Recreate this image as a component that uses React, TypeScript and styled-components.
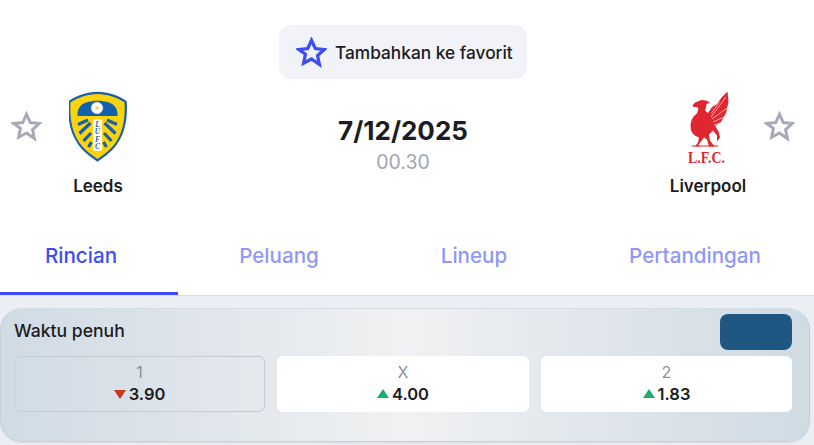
import React from "react";
import styled, { createGlobalStyle } from "styled-components";

const Global = createGlobalStyle`
  html, body { margin: 0; padding: 0; background: #fff; }
  body { font-family: "Inter", "Liberation Sans", sans-serif; color: #1c1c22; }
  * { box-sizing: border-box; }
`;
const Page = styled.div`width: 814px; height: 445px; overflow: hidden; display: flex; flex-direction: column; background: #ebeef3;`;
const Header = styled.header`height: 296px; background: #fff; display: flex; flex-direction: column; align-items: center; padding-top: 25px; flex: none;`;
const FavButton = styled.button`width: 248px; height: 54px; margin-right: 8px; border: 0; border-radius: 12px; background: #f1f3f8; display: flex; align-items: center; gap: 8px; padding: 0 0 0 17px; font: 500 17.3px "Inter", sans-serif; color: #1c1c22;`;
const Match = styled.div`width: 100%; display: grid; grid-template-columns: 196px 1fr 204px; margin-top: 12px;`;
const Team = styled.div<{ $right?: boolean }>`display: flex; flex-direction: ${(p) => (p.$right ? "row-reverse" : "row")}; align-items: flex-start; padding: ${(p) => (p.$right ? "0 19px 0 0" : "0 0 0 11px")};`;
const StarSlot = styled.div`margin-top: 20px; width: 31px; height: 31px; flex: none;`;
const TeamBody = styled.div<{ $right?: boolean }>`display: flex; flex-direction: column; align-items: center; width: ${(p) => (p.$right ? "80px" : "60px")}; margin: ${(p) => (p.$right ? "0 16px 0 0" : "0 0 0 26px")}; font: 600 17px "Inter", sans-serif;`;
const Logo = styled.div`height: 72px; display: flex; align-items: flex-start; margin-bottom: 13px;`;
const Center = styled.div`display: flex; flex-direction: column; align-items: center; padding-top: 25px;`;
const DateText = styled.div`font: 700 26px/30px "Inter", sans-serif;`;
const TimeText = styled.div`font: 400 19.5px/24px "Inter", sans-serif; color: #a2a5ae; margin-top: 4px;`;
const Tabs = styled.nav`margin-top: auto; width: 100%; display: grid; grid-template-columns: 178px 202px 188px 246px; height: 71px; border-bottom: 1px solid #dadbde;`;
const Tab = styled.div<{ $on?: boolean; $last?: boolean }>`display: flex; justify-content: center; padding: 17px ${(p) => (p.$on ? "16px" : "0")} 0 ${(p) => (p.$last ? "8px" : "0")}; font: 500 20.6px/28px "Inter", sans-serif; color: ${(p) => (p.$on ? "#3d4cf5" : "#8f97fb")}; height: 70px; border-bottom: 3px solid ${(p) => (p.$on ? "#3d4cf5" : "transparent")};`;
const Card = styled.section`margin-top: 12px; width: 810px; height: 134px; border-radius: 22px; border: 1px solid #c4d0dc; border-top-color: #d5dde5; background: linear-gradient(90deg, #d0dbe4 0%, #dfe5eb 25%, #f0f1f2 50%, #dfe5eb 75%, #d0dbe4 100%); padding: 5px 17px 0 13px; box-shadow: 0 1px 2px rgba(0,0,0,.08);`;
const CardHead = styled.div`display: flex; justify-content: space-between; align-items: flex-start; height: 36px;`;
const CardTitle = styled.div`font: 500 17.6px/34px "Inter", sans-serif;`;
const Badge = styled.div`width: 72px; height: 36px; border-radius: 8px; background: #1f5783;`;
const Odds = styled.div`display: grid; grid-template-columns: 251px 252px 251px; gap: 12px; margin-top: 6px;`;
const Odd = styled.div<{ $dim?: boolean }>`height: 56px; border-radius: 6px; text-align: center; background: ${(p) => (p.$dim ? "transparent" : "#fff")}; border: 1px solid ${(p) => (p.$dim ? "#c5ccd4" : "#fff")}; padding-top: 5px;`;
const OddLabel = styled.div`font: 400 16px/21px "Inter", sans-serif; color: #8d9099;`;
const OddValue = styled.div`display: flex; justify-content: center; align-items: center; gap: 3px; font: 600 16.5px/22px "Inter", sans-serif;`;

const Star = ({ size, color, w }: { size: number; color: string; w: number }) => (
  <svg width={size} height={size} viewBox="0 0 24 24" fill="none" stroke={color} strokeWidth={w} strokeLinejoin="miter">
    <path d="M12 2.5l2.9 6.4 7 .8-5.2 4.7 1.4 6.9L12 17l-6.1 3.3 1.4-6.9L2.1 9.7l7-.8z" />
  </svg>
);
const Tri = ({ up }: { up?: boolean }) => (
  <svg width="12" height="10" viewBox="0 0 12 10"><path d={up ? "M6 0l6 9H0z" : "M0 1h12L6 10z"} fill={up ? "#1bae6b" : "#c9361f"} /></svg>
);
const LeedsLogo = () => (
  <svg width="58" height="72" viewBox="69 11 58 72">
    <path d="M97.500 11.700C108 12 118 15 126.700 21c1 14-.7 29-7.700 40-5 9-13 15-21.500 20.700C89 76 81 70 76 61c-7-11-8.500-26-7.500-40C77 15 87 12 97.500 11.700z" fill="#1a5fa8" />
    <path d="M97.500 14C107 14.300 116 17 124.500 22.300c.8 13-.7 27-7.200 37.700C112.500 68 105 74 97.500 79 90 74 82.500 68 77.700 60c-6.500-10.700-8-24.700-7.200-37.700C79 17 88 14.300 97.500 14z" fill="#fbd30f" />
    <path d="M77.500 36C77 30 80 24.500 86 22.500c7.500-2.500 15.500-2.500 23 0 6 2 9 7.500 8.500 13.500z" fill="#1361ac" />
    <circle cx="97" cy="28" r="5.800" fill="#fff" stroke="#c5ccd2" strokeWidth=".8" />
    <circle cx="97" cy="28" r="1.800" fill="#e8d36a" />
    <path d="M93 40c2-1 7-1 9 0v29c0 1.500-2 2-4.500 2S93 70.500 93 69z" fill="#fff" />
    <g stroke="#1a5fa8" strokeWidth="3.200" fill="none">
      <path d="M78 44.500l10-4.500M79.500 53.500l11-10.500M83.500 61l7.500-8M88.500 67l3-5" />
      <path d="M117 44.500l-10-4.500M115.500 53.500l-11-10.500M111.500 61l-7.500-8M106.500 67l-3-5" />
    </g>
    <g fontFamily="Liberation Serif" fontStyle="italic" fontSize="7.500" fontWeight="700" fill="#2a5f9e" textAnchor="middle">
      <text x="97.500" y="46.500">L</text>
      <text x="97.500" y="54">U</text>
      <text x="97.500" y="61.500">F</text>
      <text x="97.500" y="69">C</text>
    </g>
  </svg>
);
const LfcLogo = () => (
  <svg width="60" height="77" viewBox="28 11 60 77" fill="#e0262f">
    <path d="M42.500 25.500L45 22.500l4-1.500 2-1 5 .5 4 2-3.500 1.500-.5 3.500-1 3q2 2 4 3l2 8 4 4 4 7 1 5-3 4 0-6-4-5-4 4 1 6 3 4 2 2-6 0-2-7-3-2-3 4-3 4 3 1-6 0 3-4 1-5q-9-3-8.500-12 .5-8 6.500-12l1.500-5-2-1.500-3 0z" />
    <path d="M58 33l4-6 5-3 5-7 5.500-5.500 1 10.500-2.500 11-5 9-7 5-4-7z" />
    <g stroke="#ffd9da" strokeWidth=".75" fill="none">
      <path d="M61 37l15-20M62 39l15-11M63 42l11-5M61.500 33l8-11M64 45l6-2" />
    </g>
    <path d="M41.700 65.500h26.500v1H41.700z" />
    <text x="56.500" y="82.500" textAnchor="middle" fontFamily="Liberation Serif" fontSize="17.500" fontWeight="700" textLength="37" lengthAdjust="spacingAndGlyphs">L.F.C.</text>
  </svg>
);

export default function App() {
  return (
    <Page>
      <Global />
      <Header>
        <FavButton><Star size={31} color="#3d4cf5" w={2.5} />Tambahkan ke favorit</FavButton>
        <Match>
          <Team>
            <StarSlot><Star size={31} color="#a7abb7" w={2.3} /></StarSlot>
            <TeamBody><Logo><LeedsLogo /></Logo>Leeds</TeamBody>
          </Team>
          <Center><DateText>7/12/2025</DateText><TimeText>00.30</TimeText></Center>
          <Team $right>
            <StarSlot><Star size={31} color="#a7abb7" w={2.3} /></StarSlot>
            <TeamBody $right><Logo><LfcLogo /></Logo>Liverpool</TeamBody>
          </Team>
        </Match>
        <Tabs>
          <Tab $on>Rincian</Tab><Tab>Peluang</Tab><Tab>Lineup</Tab><Tab $last>Pertandingan</Tab>
        </Tabs>
      </Header>
      <Card>
        <CardHead><CardTitle>Waktu penuh</CardTitle><Badge /></CardHead>
        <Odds>
          <Odd $dim><OddLabel>1</OddLabel><OddValue><Tri />3.90</OddValue></Odd>
          <Odd><OddLabel>X</OddLabel><OddValue><Tri up />4.00</OddValue></Odd>
          <Odd><OddLabel>2</OddLabel><OddValue><Tri up />1.83</OddValue></Odd>
        </Odds>
      </Card>
    </Page>
  );
}
